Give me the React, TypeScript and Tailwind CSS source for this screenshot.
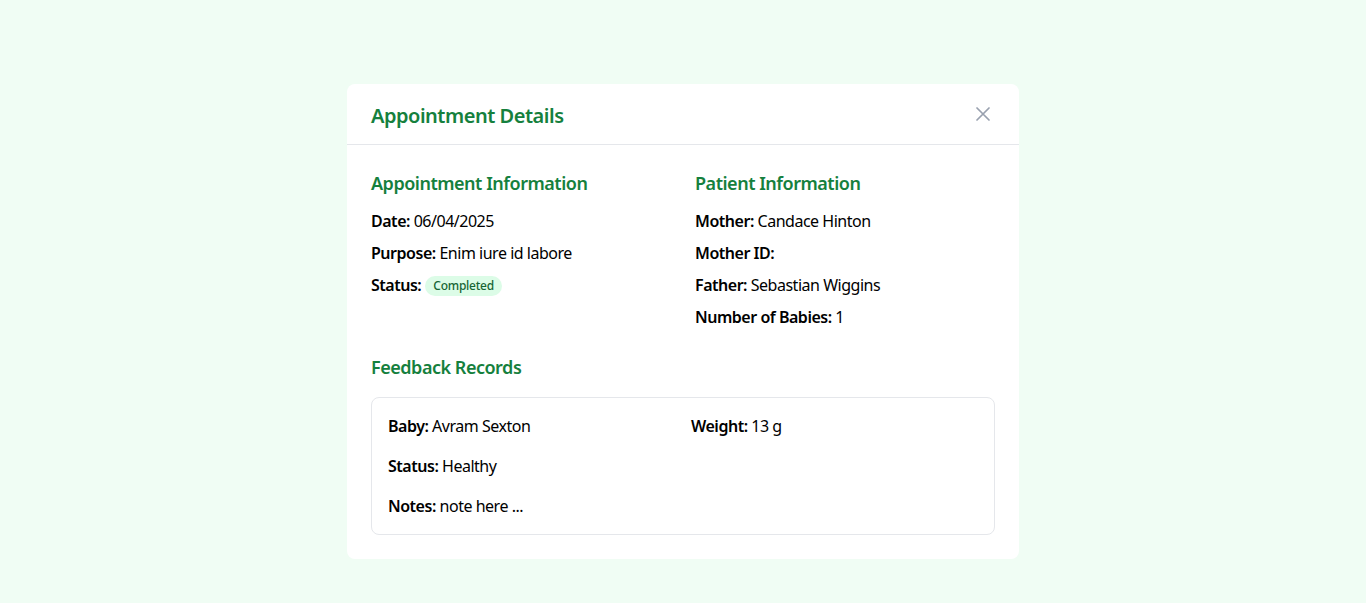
import React from "react";

const Field = ({ label, value }: { label: string; value?: React.ReactNode }) => (
  <p className="text-base leading-6 text-black">
    <span className="font-semibold">{label}:</span>{value !== undefined ? <> {value}</> : null}
  </p>
);

export default function App() {
  return (
    <div className="min-h-screen bg-[#f0fdf4] flex justify-center pt-[84px] tracking-[-0.03em]" style={{ fontFamily: '"Noto Sans", "Open Sans", sans-serif' }}>
      <div className="w-[672px] h-fit bg-white rounded-lg">
        <div className="flex items-center justify-between px-6 py-4 border-b border-gray-200">
          <h2 className="text-xl leading-7 font-semibold text-[#15803d] translate-y-[2px]">Appointment Details</h2>
          <button className="text-gray-400">
            <svg width="24" height="24" viewBox="0 0 24 24" fill="none" stroke="currentColor" strokeWidth="1.75" strokeLinecap="round">
              <path d="M18 6 6 18M6 6l12 12" />
            </svg>
          </button>
        </div>
        <div className="p-6">
          <div className="grid grid-cols-2 gap-6">
            <div>
              <h3 className="text-lg leading-7 font-semibold text-[#15803d] mb-3">Appointment Information</h3>
              <div className="flex flex-col gap-2">
                <Field label="Date" value="06/04/2025" />
                <Field label="Purpose" value="Enim iure id labore" />
                <p className="text-base leading-6 text-black flex items-center">
                  <span className="font-semibold">Status:</span>
                  <span className="ml-[4px] mt-[2px] rounded-full bg-[#dcfce7] text-[#166534] text-xs leading-4 font-medium px-2 py-0.5 tracking-[-0.02em]">Completed</span>
                </p>
              </div>
            </div>
            <div>
              <h3 className="text-lg leading-7 font-semibold text-[#15803d] mb-3">Patient Information</h3>
              <div className="flex flex-col gap-2">
                <Field label="Mother" value="Candace Hinton" />
                <Field label="Mother ID" />
                <Field label="Father" value="Sebastian Wiggins" />
                <Field label="Number of Babies" value="1" />
              </div>
            </div>
          </div>
          <div className="mt-6">
            <h3 className="text-lg leading-7 font-semibold text-[#15803d] mb-4">Feedback Records</h3>
            <div className="border border-gray-200 rounded-lg p-4 grid grid-cols-2 gap-4">
              <Field label="Baby" value="Avram Sexton" />
              <Field label="Weight" value="13 g" />
              <Field label="Status" value="Healthy" />
              <div />
              <Field label="Notes" value="note here ..." />
            </div>
          </div>
        </div>
      </div>
    </div>
  );
}
